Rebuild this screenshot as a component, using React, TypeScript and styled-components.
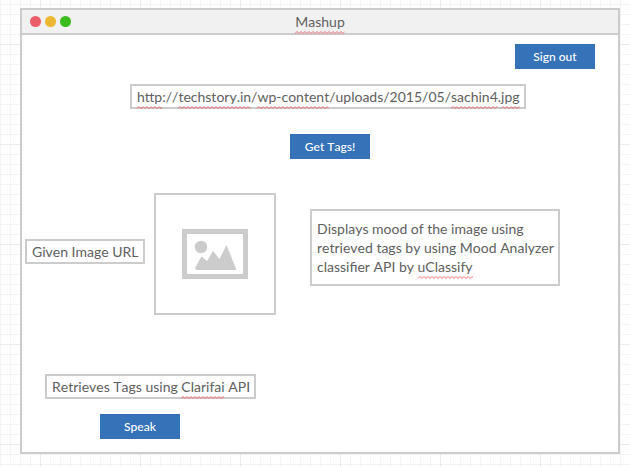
import React, { useId } from "react";
import styled, { createGlobalStyle } from "styled-components";

const GlobalStyle = createGlobalStyle`
  * { box-sizing: border-box; }
  html, body { margin: 0; padding: 0; overflow: hidden; }
  body {
    font-family: Lato, "Liberation Sans", sans-serif;
    font-kerning: none;
    color: #606060;
  }
`;

const Canvas = styled.main`
  width: 630px;
  height: 467px;
  padding: 8px 0 0 20px;
  overflow: hidden;
  background-color: #fff;
  background-image:
    linear-gradient(to right, #ececec 1px, transparent 1px),
    linear-gradient(to bottom, #ececec 1px, transparent 1px),
    linear-gradient(to right, #f4f4f4 1px, transparent 1px),
    linear-gradient(to bottom, #f4f4f4 1px, transparent 1px);
  background-size: 100px 100px, 100px 100px, 10px 10px, 10px 10px;
  background-position: 40px 0, 0 44px, 0 0, 0 4px;
`;

const Window = styled.section`
  width: 600px;
  height: 446px;
  border: 2px solid #ccc;
  background: #fff;
`;

const TitleBar = styled.header`
  display: grid;
  grid-template-columns: 1fr auto 1fr;
  align-items: center;
  height: 25px;
  padding: 0 8.3px;
  border-bottom: 2px solid #ccc;
  background: #f1f1f1;
`;

const Lights = styled.div`
  display: flex;
  gap: 4.4px;
`;

const Light = styled.span<{ $color: string }>`
  width: 10.6px;
  height: 10.6px;
  border-radius: 50%;
  background: ${(p) => p.$color};
`;

const Title = styled.h1`
  margin: 0;
  font-size: 14px;
  font-weight: 400;
  line-height: 19px;
`;

const Body = styled.div`
  display: flex;
  flex-direction: column;
  align-items: flex-start;
  padding-top: 9px;
`;

const Button = styled.button<{ $left: number; $top?: number }>`
  width: 80px;
  height: 25px;
  margin: ${(p) => p.$top ?? 0}px 0 0 ${(p) => p.$left}px;
  padding: 0;
  border: 0;
  background: #3572b8;
  color: #fff;
  font: 500 12px/25px Lato, "Liberation Sans", sans-serif;
  font-kerning: none;
  text-align: center;
`;

const TextBox = styled.div<{ $width: number; $left?: number; $top?: number; $tall?: boolean }>`
  flex: none;
  width: ${(p) => p.$width}px;
  height: ${(p) => (p.$tall ? 77 : 25)}px;
  margin: ${(p) => p.$top ?? 0}px 0 0 ${(p) => p.$left ?? 0}px;
  padding: ${(p) => (p.$tall ? 8 : 1)}px 0 0 5px;
  border: 2px solid #ccc;
  background: #fff;
  font-size: 14px;
  line-height: 19px;
  white-space: nowrap;
`;

const Row = styled.div`
  display: flex;
  align-items: center;
  margin: 34px 0 0 3px;
`;

const ImageFrame = styled.div`
  display: flex;
  align-items: center;
  justify-content: center;
  width: 122px;
  height: 122px;
  margin: 0 34px 0 9px;
  border: 2px solid #ccc;
`;

const Flagged = styled.span`
  position: relative;
  display: inline-block;
`;

const Wave = styled.svg`
  position: absolute;
  left: 0;
  bottom: -3px;
  width: 100%;
  height: 3px;
`;

function Misspelt({ children }: { children: React.ReactNode }) {
  const id = useId();
  return (
    <Flagged>
      {children}
      <Wave aria-hidden="true">
        <pattern id={id} width="4" height="3" patternUnits="userSpaceOnUse">
          <path d="M-1 1.5 L0 2.5 L2 .5 L4 2.5 L5 1.5" fill="none" stroke="#f34b4b" strokeWidth=".8" />
        </pattern>
        <rect width="100%" height="3" fill={`url(#${id})`} />
      </Wave>
    </Flagged>
  );
}

function PictureIcon() {
  return (
    <svg width="66" height="50" viewBox="0 0 66 50" fill="#ccc" aria-hidden="true">
      <path fillRule="evenodd" d="M0 0H66V50H0ZM5 5V45H61V5Z" />
      <circle cx="19" cy="18" r="6.2" />
      <path d="M13 39L19.5 27.5L25 32L31 22L37.5 30L44.5 16L54.5 41H14.5Z" />
    </svg>
  );
}

export default function App() {
  return (
    <>
      <GlobalStyle />
      <Canvas>
        <Window>
          <TitleBar>
            <Lights>
              <Light $color="#eb5f6b" />
              <Light $color="#ecb731" />
              <Light $color="#3cbc1c" />
            </Lights>
            <Title><Misspelt>Mashup</Misspelt></Title>
          </TitleBar>
          <Body>
            <Button $left={493}>Sign out</Button>
            <TextBox $width={396} $left={108} $top={15}>
              <Misspelt>http</Misspelt>://<Misspelt>techstory.in</Misspelt>/<Misspelt>wp-content</Misspelt>
              /uploads/2015/05/<Misspelt>sachin4</Misspelt>.<Misspelt>jpg</Misspelt>
            </TextBox>
            <Button $left={268} $top={25}>Get Tags!</Button>
            <Row>
              <TextBox $width={120} $top={-5}>Given Image URL</TextBox>
              <ImageFrame><PictureIcon /></ImageFrame>
              <TextBox $width={250} $top={-13} $tall>
                Displays mood of the image using<br />
                retrieved tags by using Mood Analyzer<br />
                classifier API by <Misspelt>uClassify</Misspelt>
              </TextBox>
            </Row>
            <TextBox $width={211} $left={23} $top={59}>
              Retrieves Tags using <Misspelt>Clarifai</Misspelt> API
            </TextBox>
            <Button $left={78} $top={15}>Speak</Button>
          </Body>
        </Window>
      </Canvas>
    </>
  );
}
